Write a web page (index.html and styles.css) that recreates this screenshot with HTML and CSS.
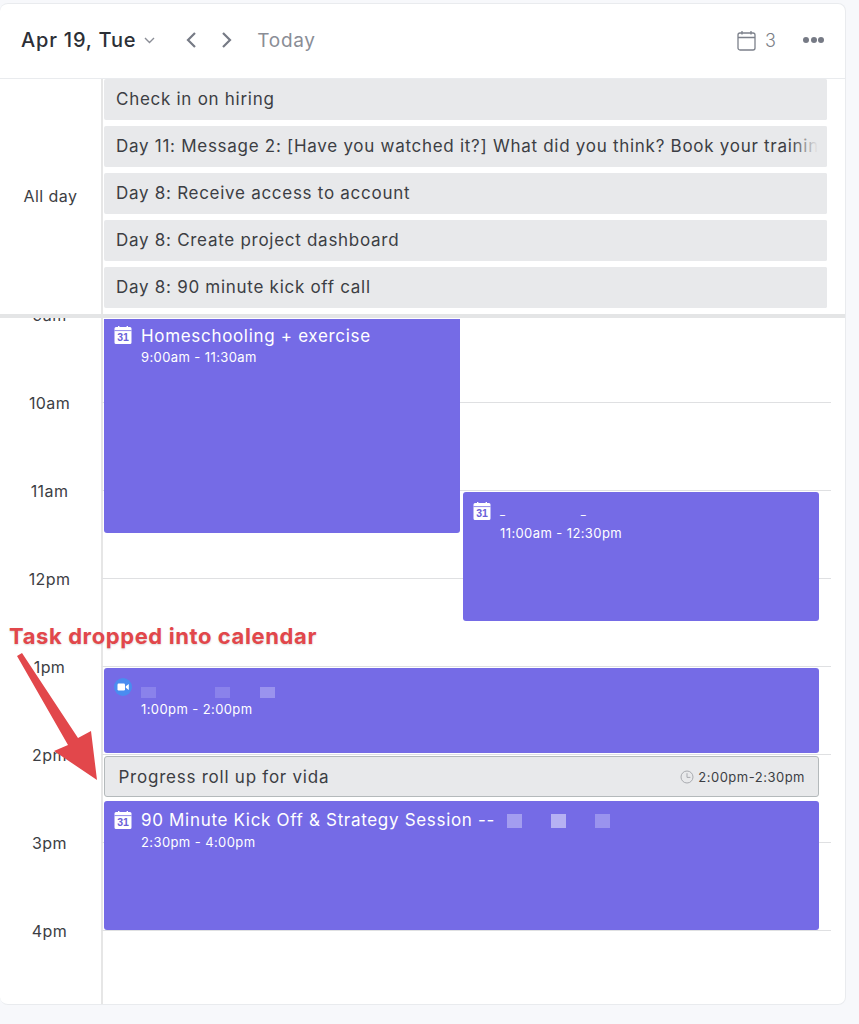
FILE: index.html
```html
<!DOCTYPE html>
<html lang="en">
<head>
    <meta charset="UTF-8">
    <meta name="viewport" content="width=device-width, initial-scale=1.0">
    <title>Calendar - Apr 19</title>
    <link rel="stylesheet" href="styles.css">
</head>
<body>

    <div class="calendar">

        <!-- Header -->
        <div class="cal-header">
            <div class="date-picker">
                <span class="date-label">Apr 19, Tue</span>
                <svg class="date-caret" width="11" height="7" viewBox="0 0 11 7"><path d="M1 1l4.5 4.5L10 1" fill="none" stroke="#8a8d96" stroke-width="1.4"/></svg>
            </div>
            <div class="nav-arrows">
                <svg width="12" height="18" viewBox="0 0 12 18"><path d="M10 2L3 9l7 7" fill="none" stroke="#767a85" stroke-width="2.2"/></svg>
                <svg width="12" height="18" viewBox="0 0 12 18"><path d="M2 2l7 7-7 7" fill="none" stroke="#767a85" stroke-width="2.2"/></svg>
            </div>
            <span class="today">Today</span>
            <div class="header-right">
                <svg width="19" height="21" viewBox="0 0 19 21"><rect x="1" y="3" width="17" height="17" rx="2" fill="none" stroke="#7c808a" stroke-width="1.3"/><path d="M1 7.5h17M5 1v3.5M14 1v3.5" fill="none" stroke="#7c808a" stroke-width="1.3"/></svg>
                <span class="cal-count">3</span>
                <div class="more-dots"><i></i><i></i><i></i></div>
            </div>
        </div>

        <!-- All day tasks -->
        <div class="all-day">
            <div class="all-day-label">All day</div>
            <div class="all-day-list">
                <div class="all-day-item">Check in on hiring</div>
                <div class="all-day-item">Day 11: Message 2: [Have you watched it?] What did you think? Book your training session</div>
                <div class="all-day-item">Day 8: Receive access to account</div>
                <div class="all-day-item">Day 8: Create project dashboard</div>
                <div class="all-day-item">Day 8: 90 minute kick off call</div>
            </div>
        </div>

        <!-- Hour grid -->
        <div class="day-grid">
            <div class="hours">
                <div class="hour-row"><span class="hour-label">9am</span></div>
                <div class="hour-row"><span class="hour-label">10am</span></div>
                <div class="hour-row"><span class="hour-label">11am</span></div>
                <div class="hour-row"><span class="hour-label">12pm</span></div>
                <div class="hour-row"><span class="hour-label">1pm</span></div>
                <div class="hour-row"><span class="hour-label">2pm</span></div>
                <div class="hour-row"><span class="hour-label">3pm</span></div>
                <div class="hour-row"><span class="hour-label">4pm</span></div>
            </div>

            <div class="event event-school">
                <svg class="event-icon" viewBox="0 0 18 18"><use href="#gcal"/></svg>
                <div>
                    <div class="event-title">Homeschooling + exercise</div>
                    <div class="event-time">9:00am - 11:30am</div>
                </div>
            </div>

            <div class="event event-late">
                <svg class="event-icon" viewBox="0 0 18 18"><use href="#gcal"/></svg>
                <div>
                    <div class="event-title event-title-blank"><span>_</span><span>_</span></div>
                    <div class="event-time">11:00am - 12:30pm</div>
                </div>
            </div>

            <div class="event event-zoom">
                <svg class="event-icon" viewBox="0 0 18 18"><circle cx="9" cy="9" r="9" fill="#4a8cf0"/><rect x="3.5" y="5.5" width="7.5" height="7" rx="1.2" fill="#fff"/><path d="M11.8 8.2l3-2.2v6l-3-2.2z" fill="#fff"/></svg>
                <div>
                    <div class="blur-row-zoom"><i class="blur blur-dim"></i><i class="blur blur-dim"></i><i class="blur blur-light"></i></div>
                    <div class="event-time">1:00pm - 2:00pm</div>
                </div>
            </div>

            <div class="task-event">
                <span class="task-name">Progress roll up for vida</span>
                <span class="task-time">
                    <svg width="14" height="14" viewBox="0 0 14 14"><circle cx="7" cy="7" r="6" fill="none" stroke="#a9abb0" stroke-width="1"/><path d="M7 3.2V7.4h3.4" fill="none" stroke="#a9abb0" stroke-width="1"/></svg>
                    2:00pm-2:30pm
                </span>
            </div>

            <div class="event event-kickoff">
                <svg class="event-icon" viewBox="0 0 18 18"><use href="#gcal"/></svg>
                <div>
                    <div class="kickoff-title">
                        <div class="event-title">90 Minute Kick Off &amp; Strategy Session --</div>
                        <div class="blur-row"><i class="blur"></i><i class="blur blur-bright"></i><i class="blur blur-light"></i></div>
                    </div>
                    <div class="event-time">2:30pm - 4:00pm</div>
                </div>
            </div>
        </div>
    </div>

    <!-- Annotation on top of the screenshot -->
    <div class="callout">Task dropped into calendar</div>
    <svg class="callout-arrow" width="110" height="150" viewBox="0 0 110 150">
        <path d="M17 6l5-3 56 85 13-7 6 49-43-29 14-6z" fill="#e2474b"/>
    </svg>

    <!-- shared google calendar glyph -->
    <svg class="icon-defs" width="0" height="0">
        <symbol id="gcal" viewBox="0 0 18 18">
            <path d="M2 1h14a1.5 1.5 0 0 1 1.5 1.5v14A1.5 1.5 0 0 1 16 18H2A1.5 1.5 0 0 1 .5 16.5v-14A1.5 1.5 0 0 1 2 1z" fill="#fff"/>
            <path d="M4 0h1.4v2.4H4zM12.6 0H14v2.4h-1.4z" fill="#fff"/>
            <path d="M.5 4.6h17" stroke="#756be6" stroke-width=".8"/>
            <text x="9" y="15.2" text-anchor="middle" font-family="Liberation Sans, sans-serif" font-size="10.5" font-weight="700" fill="#6a60d8">31</text>
        </symbol>
    </svg>

</body>
</html>
```

FILE: styles.css
```css
/* Global Styles */
body {
    font-family: 'Inter', 'Liberation Sans', sans-serif;
    background-color: #f7f8fb;
    margin: 0;
    padding: 0;
    position: relative;
    color: #3c3e44;
}

/* Calendar Card */
.calendar {
    width: 846px;
    height: 1002px;
    margin: 3px 0 19px 0;
    background-color: #ffffff;
    border: 1px solid #e9ebee;
    border-left: none;
    border-radius: 8px;
    box-sizing: border-box;
    display: flex;
    flex-direction: column;
    overflow: hidden;
}

/* Header */
.cal-header {
    height: 75px;
    flex: none;
    box-sizing: border-box;
    display: flex;
    align-items: center;
    padding: 0 21px 2px 21px;
    border-bottom: 1px solid #e9ebee;
}

.date-picker {
    display: flex;
    align-items: center;
    gap: 8px;
}

.date-label {
    font-size: 20px;
    font-weight: 500;
    letter-spacing: 0.8px;
    color: #2c2f36;
}

.nav-arrows {
    display: flex;
    align-items: center;
    gap: 24px;
    margin-left: 30px;
}

.today {
    margin-left: 24px;
    font-size: 19px;
    color: #8a8d96;
    letter-spacing: 0.7px;
}

.header-right {
    margin-left: auto;
    display: flex;
    align-items: center;
}

.cal-count {
    margin-left: 9px;
    font-size: 18px;
    font-weight: 300;
    color: #7c7f88;
}

.more-dots {
    margin-left: 27px;
    display: flex;
    gap: 1.5px;
}

.more-dots i {
    width: 6px;
    height: 6px;
    border-radius: 50%;
    background-color: #767a85;
}

/* All day section */
.all-day {
    height: 239px;
    flex: none;
    box-sizing: border-box;
    display: flex;
    position: relative;
    z-index: 2;
    background-color: #ffffff;
    border-bottom: 4px solid #e4e5e6;
}

.all-day-label {
    width: 103px;
    flex: none;
    box-sizing: border-box;
    display: flex;
    align-items: center;
    justify-content: center;
    padding-bottom: 2px;
    border-right: 2px solid #e6e6e6;
    font-size: 16px;
    letter-spacing: 0.45px;
}

.all-day-list {
    width: 723px;
    margin-left: 1px;
    display: flex;
    flex-direction: column;
    gap: 6px;
}

.all-day-item {
    height: 41px;
    flex: none;
    line-height: 41px;
    padding: 0 12px;
    background-color: #e8e9eb;
    border-radius: 2px;
    font-size: 17px;
    white-space: nowrap;
    overflow: hidden;
    letter-spacing: 0.72px;
    position: relative;
}

/* long names fade out at the right edge */
.all-day-item::after {
    content: "";
    position: absolute;
    top: 0;
    right: 0;
    bottom: 0;
    width: 36px;
    background: linear-gradient(to right, rgba(232, 233, 235, 0), #e8e9eb 75%);
}

/* Hour grid */
.day-grid {
    flex: 1;
    position: relative;
    overflow: hidden;
}

.hours {
    margin-top: -4px;
}

.hour-row {
    height: 88px;
    box-sizing: border-box;
    margin-right: 14px;
    display: flex;
}

.hour-row::after {
    content: "";
    flex: 1;
    border-top: 1px solid #dfe0e2;
    border-left: 2px solid #e6e6e6;
}

.hour-label {
    width: 101px;
    flex: none;
    height: 20px;
    margin-top: -9px;
    text-align: center;
    font-size: 16px;
    line-height: 20px;
    letter-spacing: 0.4px;
    padding-right: 2px;
    box-sizing: border-box;
}

/* Events sit on top of the hour lines */
.event {
    position: absolute;
    box-sizing: border-box;
    display: flex;
    gap: 9px;
    padding: 9px 10px;
    background-color: #756be6;
    color: #ffffff;
    border-radius: 3px;
}

.event-icon {
    width: 18px;
    height: 18px;
    margin-top: 1px;
    flex: none;
}

.event-title {
    font-size: 17px;
    line-height: 21px;
    letter-spacing: 0.68px;
    white-space: nowrap;
}

.event-time {
    font-size: 13px;
    line-height: 16px;
    margin-top: 3px;
    letter-spacing: 0.4px;
}

.event-school {
    left: 104px;
    top: 1px;
    width: 356px;
    height: 214px;
    padding-top: 6px;
    border-radius: 0 0 3px 3px;
}

.event-school .event-title {
    margin-top: 1px;
}

.event-school .event-time {
    margin-top: 2px;
}

.event-late {
    left: 463px;
    top: 174px;
    width: 356px;
    height: 129px;
}

.event-zoom {
    left: 104px;
    top: 350px;
    width: 715px;
    height: 85px;
}

.event-kickoff {
    left: 104px;
    top: 483px;
    width: 715px;
    height: 129px;
}

.event-title-blank {
    display: flex;
    gap: 75px;
    font-size: 11px;
}

.kickoff-title {
    display: flex;
    align-items: center;
}

/* Redacted bits of text */
.blur-row {
    display: flex;
    gap: 29px;
    margin-left: 12px;
}

.blur-row-zoom {
    height: 21px;
    display: flex;
    align-items: flex-end;
    gap: 59px;
}

.blur-row-zoom .blur {
    height: 11px;
}

.blur-row-zoom .blur + .blur + .blur {
    margin-left: -29px;
}

.blur {
    width: 15px;
    height: 14px;
    background-color: #a39df0;
}

.blur-dim {
    background-color: #8a82eb;
}

.blur-bright {
    background-color: #b6b1f3;
}

.blur-light {
    background-color: #9a93ee;
}

/* Task dropped on the day */
.task-event {
    position: absolute;
    left: 104px;
    top: 438px;
    width: 715px;
    height: 41px;
    box-sizing: border-box;
    display: flex;
    align-items: center;
    justify-content: space-between;
    padding: 0 13px 0 13.5px;
    background-color: #e8e9eb;
    border: 1.5px solid #b4b9bb;
    border-radius: 3px;
}

.task-name {
    font-size: 17px;
    letter-spacing: 0.76px;
}

.task-time {
    display: flex;
    align-items: center;
    gap: 4px;
    font-size: 13px;
    letter-spacing: 0.5px;
}

/* Annotation */
.callout {
    position: absolute;
    left: 9px;
    top: 622px;
    font-family: 'Inter', sans-serif;
    font-size: 22px;
    line-height: 28px;
    font-weight: 700;
    letter-spacing: 0.6px;
    color: #e2474b;
    text-shadow: 0 1px 2px rgba(0, 0, 0, 0.15);
}

.callout-arrow {
    position: absolute;
    left: 0;
    top: 650px;
}

.icon-defs {
    position: absolute;
}
```
